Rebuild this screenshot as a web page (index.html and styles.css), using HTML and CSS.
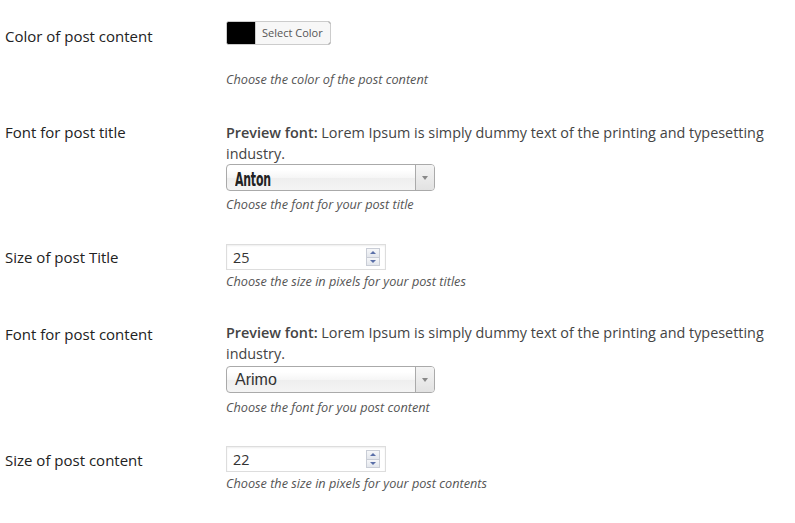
FILE: index.html
```html
<!DOCTYPE html>
<html lang="en">
<head>
<meta charset="utf-8">
<title>Post settings</title>
<link rel="stylesheet" href="styles.css">
</head>
<body>
<div class="form">
  <div class="row row-color">
    <div class="label">Color of post content</div>
    <div class="field">
      <button class="color-btn" type="button"><span class="swatch"></span><span class="color-text">Select Color</span></button>
      <p class="desc desc-color">Choose the color of the post content</p>
    </div>
  </div>

  <div class="row row-font">
    <div class="label">Font for post title</div>
    <div class="field">
      <p class="preview"><strong>Preview font:</strong> Lorem Ipsum is simply dummy text of the printing and typesetting industry.</p>
      <div class="select"><span class="select-value"><span class="anton">Anton</span></span><span class="select-arrow"><span class="tri"></span></span></div>
      <p class="desc desc-select">Choose the font for your post title</p>
    </div>
  </div>

  <div class="row row-size">
    <div class="label">Size of post Title</div>
    <div class="field">
      <div class="number"><span class="number-value">25</span><span class="spin"><span class="spin-up"><span class="up"></span></span><span class="spin-down"><span class="down"></span></span></span></div>
      <p class="desc desc-number">Choose the size in pixels for your post titles</p>
    </div>
  </div>

  <div class="row row-font2">
    <div class="label">Font for post content</div>
    <div class="field">
      <p class="preview"><strong>Preview font:</strong> Lorem Ipsum is simply dummy text of the printing and typesetting industry.</p>
      <div class="select select2"><span class="select-value arimo">Arimo</span><span class="select-arrow"><span class="tri"></span></span></div>
      <p class="desc desc-select2">Choose the font for you post content</p>
    </div>
  </div>

  <div class="row row-size2">
    <div class="label">Size of post content</div>
    <div class="field">
      <div class="number"><span class="number-value">22</span><span class="spin"><span class="spin-up"><span class="up"></span></span><span class="spin-down"><span class="down"></span></span></span></div>
      <p class="desc desc-number">Choose the size in pixels for your post contents</p>
    </div>
  </div>
</div>
</body>
</html>
```

FILE: styles.css
```css
html, body {
  margin: 0;
  padding: 0;
  background: #fff;
}
body {
  font-family: "Open Sans", "Noto Sans", sans-serif;
  color: #444;
  font-size: 14px;
}
p { margin: 0; }

.form {
  display: flex;
  flex-direction: column;
  padding: 21px 0 0 5px;
}
.row {
  display: flex;
}
.label {
  width: 221px;
  flex: none;
  color: #222;
  font-size: 15px;
  line-height: 20px;
}
.field {
  flex: 1;
  padding-right: 10px;
}

.row-color .label { padding-top: 5px; }
.row-font { margin-top: 34px; }
.row-font .label { padding-top: 0; }
.row-size { margin-top: 31px; }
.row-size .label { padding-top: 3px; }
.row-font2 { margin-top: 32px; }
.row-font2 .label { padding-top: 2px; }
.row-size2 { margin-top: 30px; }
.row-size2 .label { padding-top: 4px; }

/* color picker */
.color-btn {
  display: flex;
  align-items: stretch;
  height: 24px;
  padding: 0;
  margin: 0;
  border: 1px solid #ccc;
  border-radius: 3px;
  background: #000;
  overflow: hidden;
  cursor: pointer;
  font-family: "Open Sans", sans-serif;
}
.swatch {
  width: 28px;
  background: #000;
}
.color-text {
  font-size: 11px;
  line-height: 22px;
  padding: 0 7px 0 6px;
  color: #555;
  background: #f7f7f7;
  border-left: 1px solid #ccc;
}

.desc {
  font-size: 12.7px;
  line-height: 18px;
  font-style: italic;
  color: #555;
}
.desc-color { margin-top: 25px; }
.desc-select { margin-top: 4px; }
.desc-select2 { margin-top: 5px; }
.desc-number { margin-top: 2px; }

.preview {
  font-size: 14.4px;
  line-height: 21px;
  color: #444;
}
.preview strong { font-weight: 600; }

/* select */
.select {
  display: flex;
  width: 209px;
  height: 27px;
  box-sizing: border-box;
  border: 1px solid #aaa;
  border-radius: 4px;
  background: linear-gradient(#fff 20%, #f6f6f6 50%, #eee 52%, #f4f4f4 100%);
  overflow: hidden;
}
.select2 { margin-top: 2px; }
.select-value {
  flex: 1;
  padding-left: 8px;
  color: #333;
  overflow: hidden;
  white-space: nowrap;
}
.anton {
  font-family: "DejaVu Sans Condensed", "DejaVu Sans", sans-serif;
  font-weight: bold;
  font-size: 19px;
  line-height: 28px;
  color: #222;
  display: inline-block;
  transform: scaleX(0.64);
  transform-origin: 0 0;
  letter-spacing: -0.3px;
}
.arimo {
  font-family: "Liberation Sans", Arial, sans-serif;
  font-size: 16px;
  line-height: 26px;
}
.select-arrow {
  width: 18px;
  flex: none;
  border-left: 1px solid #aaa;
  background: linear-gradient(#f4f4f4, #e2e2e2);
  display: flex;
  align-items: center;
  justify-content: center;
}
.tri {
  width: 0;
  height: 0;
  border-left: 3px solid transparent;
  border-right: 3px solid transparent;
  border-top: 4px solid #888;
}

/* number */
.number {
  display: flex;
  align-items: center;
  width: 160px;
  height: 26px;
  box-sizing: border-box;
  border: 1px solid #ddd;
  box-shadow: inset 0 1px 2px rgba(0,0,0,0.07);
  background: #fff;
  padding: 0 4px 0 6px;
}
.number-value {
  flex: 1;
  color: #333;
  font-size: 14.4px;
}
.spin {
  display: flex;
  flex-direction: column;
  width: 14px;
  height: 18px;
  margin-right: 1px;
}
.spin-up, .spin-down {
  flex: 1;
  box-sizing: border-box;
  border: 1px solid #c9cdd6;
  background: linear-gradient(#f6f7f9, #e3e6ec);
  display: flex;
  align-items: center;
  justify-content: center;
}
.spin-down { border-top: none; }
.up {
  width: 0; height: 0;
  border-left: 3px solid transparent;
  border-right: 3px solid transparent;
  border-bottom: 3px solid #5a6fa8;
}
.down {
  width: 0; height: 0;
  border-left: 3px solid transparent;
  border-right: 3px solid transparent;
  border-top: 3px solid #5a6fa8;
}
```
